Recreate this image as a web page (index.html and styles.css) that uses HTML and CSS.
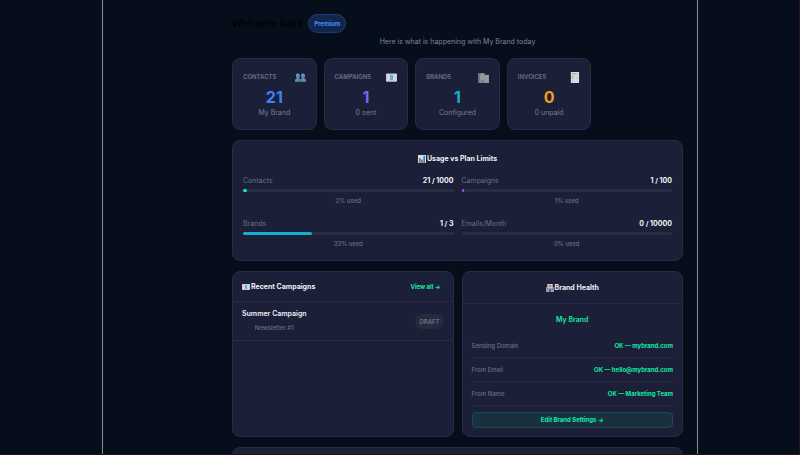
FILE: index.html
```
<!DOCTYPE html>
<html lang="en">
<head>
	<meta charset="UTF-8">
	<meta name="viewport" content="width=device-width, initial-scale=1">
	<title>Dashboard</title>
	<link rel="stylesheet" href="styles.css">
</head>
<body>
	<svg class="sprite" aria-hidden="true">
		<symbol id="icon-mail" viewBox="0 0 12 9">
			<rect width="12" height="9" rx="1" fill="#c9cdd2"/>
			<path d="M1 1l3 3.500L1 8M11 1L8 4.500 11 8" fill="none" stroke="#f2f3f4" stroke-width="1"/>
			<rect x="4.500" y="2" width="3" height="5" fill="#4a94cf"/>
			<path d="M5 3h2M5 4.500h1.500M5 6h2" stroke="#b5d8ef" stroke-width=".6"/>
		</symbol>
	</svg>

	<div class="frame">
		<main class="content">
			<header class="page-header">
				<div class="title-row">
					<h1>Welcome back</h1>
					<span class="plan-badge">Premium</span>
				</div>
				<p>Here is what is happening with My Brand today</p>
			</header>

			<section class="stats">
				<div class="card stat">
					<div class="stat-top">
						<span class="stat-label">Contacts</span>
						<svg class="stat-icon" viewBox="0 0 12 12" aria-hidden="true">
							<path d="M0 10.500V9q0-2 2-2.300Q1 5.500 1 4q0-2.500 2.200-2.500T5.400 4q0 1.500-1 2.700 1.400.3 1.600 1.800.2-1.500 1.600-1.800-1-1.200-1-2.700 0-2.500 2.200-2.500T11 4q0 1.500-1 2.700 2 .3 2 2.300v1.500z" fill="#5d8dab"/>
							<path d="M1.500 3.500q.5-1.500 1.700-1.500M7.200 3.500Q7.700 2 8.900 2" fill="none" stroke="#86b3c9" stroke-width=".8"/>
							<path d="M6 8v2.500" stroke="#284a66" stroke-width=".6"/>
						</svg>
					</div>
					<div class="stat-value blue">21</div>
					<div class="stat-note">My Brand</div>
				</div>
				<div class="card stat">
					<div class="stat-top">
						<span class="stat-label">Campaigns</span>
						<svg class="stat-icon" aria-hidden="true"><use href="#icon-mail"/></svg>
					</div>
					<div class="stat-value purple">1</div>
					<div class="stat-note">0 sent</div>
				</div>
				<div class="card stat">
					<div class="stat-top">
						<span class="stat-label">Brands</span>
						<svg class="stat-icon" viewBox="0 0 12 12" aria-hidden="true">
							<path d="M0 1.500L7 1v2h5v9H0z" fill="#8b9799"/>
							<path d="M0 1.500h2V12H0z" fill="#69757a"/>
							<path d="M3 3h3M3 5h3M3 7h3M8 5h3M8 7h3M8 9h3" stroke="#9ca8a8" stroke-width=".8"/>
							<path d="M4 9h2v3H4z" fill="#69757a"/>
						</svg>
					</div>
					<div class="stat-value cyan">1</div>
					<div class="stat-note">Configured</div>
				</div>
				<div class="card stat">
					<div class="stat-top">
						<span class="stat-label">Invoices</span>
						<svg class="stat-icon" viewBox="0 0 12 12" aria-hidden="true">
							<path d="M2 0h9v12H2z" fill="#d9dbdc"/>
							<path d="M3 2h6M3 5h2M3 7h2" stroke="#777d84" stroke-width=".7"/>
							<path d="M7 5h3M7 7h3M3 10h3" stroke="#bfc3c6" stroke-width=".7"/>
						</svg>
					</div>
					<div class="stat-value orange">0</div>
					<div class="stat-note">0 unpaid</div>
				</div>
			</section>

			<section class="card usage">
				<h2>
					<svg class="heading-icon" viewBox="0 0 8 8" aria-hidden="true">
						<rect width="8" height="8" fill="#d5dce2"/>
						<path d="M1 3h1.700v5H1z" fill="#3f9d5b"/>
						<path d="M3.200 4.500h1.600V8H3.200z" fill="#d04848"/>
						<path d="M5.400 1H7v7H5.400z" fill="#3478c4"/>
					</svg>
					Usage vs Plan Limits
				</h2>
				<div class="usage-grid">
					<div class="usage-item">
						<div class="usage-top"><span>Contacts</span><strong>21 / 1000</strong></div>
						<div class="bar"><div class="bar-fill green-fill" style="width: 2%"></div></div>
						<p>2% used</p>
					</div>
					<div class="usage-item">
						<div class="usage-top"><span>Campaigns</span><strong>1 / 100</strong></div>
						<div class="bar"><div class="bar-fill purple-fill" style="width: 1%"></div></div>
						<p>1% used</p>
					</div>
					<div class="usage-item">
						<div class="usage-top"><span>Brands</span><strong>1 / 3</strong></div>
						<div class="bar"><div class="bar-fill cyan-fill" style="width: 33%"></div></div>
						<p>33% used</p>
					</div>
					<div class="usage-item">
						<div class="usage-top"><span>Emails/Month</span><strong>0 / 10000</strong></div>
						<div class="bar"></div>
						<p>0% used</p>
					</div>
				</div>
			</section>

			<div class="columns">
				<section class="card">
					<div class="panel-head">
						<h2>
							<svg class="heading-icon" aria-hidden="true"><use href="#icon-mail"/></svg>
							Recent Campaigns
						</h2>
						<a class="view-all" href="#">View all →</a>
					</div>
					<div class="campaign">
						<div class="campaign-info">
							<h3>Summer Campaign</h3>
							<p>Newsletter #1</p>
						</div>
						<span class="status">Draft</span>
					</div>
				</section>

				<section class="card">
					<div class="panel-head centered">
						<h2>
							<svg class="heading-icon" viewBox="0 0 8 8" aria-hidden="true">
								<path d="M0 3h1V0h6v3h1v5H0z" fill="#9b9fa5"/>
								<path d="M2 0h4v4H2z" fill="#d9d5d8"/>
								<path d="M4 .5v3M2.500 2h3" stroke="#d9534f" stroke-width="1"/>
								<path d="M3 5h2v3H3z" fill="#59616e"/>
								<path d="M.7 5h1M6.300 5h1" stroke="#59616e"/>
							</svg>
							Brand Health
						</h2>
					</div>
					<div class="health">
						<h3>My Brand</h3>
						<dl>
							<div class="health-row"><dt>Sending Domain</dt><dd>OK — mybrand.com</dd></div>
							<div class="health-row"><dt>From Email</dt><dd>OK — hello@mybrand.com</dd></div>
							<div class="health-row"><dt>From Name</dt><dd>OK — Marketing Team</dd></div>
						</dl>
						<a class="edit-link" href="#">Edit Brand Settings →</a>
					</div>
				</section>
			</div>

			<section class="card next-card"></section>
		</main>
	</div>
</body>
</html>
```

FILE: styles.css
```
* {
	box-sizing: border-box;
	margin: 0;
	padding: 0;
}

body {
	height: 100vh;
	overflow: hidden;
	padding: 0 101px 0 102px;
	font-family: Inter, "Liberation Sans", sans-serif;
	font-size: 7px;
	line-height: 10px;
	color: #6b7185;
	background-color: #070e1b;
	border-right: 1px solid #28101c;
	border-bottom: 1px solid #28101c;
}

a {
	text-decoration: none;
}

.sprite {
	position: absolute;
	width: 0;
	height: 0;
}

.frame {
	height: 100%;
	overflow: hidden;
	padding: 14px 14px 0 129px;
	border-left: 1px solid #8b8e97;
	border-right: 1px solid #8b8e97;
}

.content {
	display: flex;
	flex-direction: column;
	gap: 10px;
}

.card {
	background-color: #1b1f38;
	border: 1px solid #272c43;
	border-radius: 8px;
}

.page-header {
	margin-bottom: 1px;
	text-align: center;
}

.title-row {
	display: flex;
	align-items: center;
	gap: 5px;
	margin-bottom: 4px;
}

h1 {
	font-size: 10px;
	font-weight: 600;
	line-height: 19px;
	color: #010206;
}

.plan-badge {
	padding: 0 5px;
	font-size: 6px;
	font-weight: 700;
	line-height: 17px;
	color: #4a8df0;
	background-color: #10264d;
	border: 1px solid #1b3d77;
	border-radius: 10px;
}

.page-header p {
	color: #7f8492;
}

/* stat cards */
.stats {
	display: grid;
	grid-template-columns: repeat(5, 1fr);
	gap: 7px;
}

.stat {
	padding: 12px 10px 11px;
	text-align: center;
}

.stat-top {
	display: flex;
	align-items: center;
	justify-content: space-between;
	height: 12px;
	margin-bottom: 4px;
}

.stat-label {
	font-size: 6px;
	font-weight: 600;
	text-transform: uppercase;
}

.stat-icon {
	width: 11px;
	height: 11px;
}

.stat-value {
	margin-bottom: 1px;
	font-size: 16px;
	font-weight: 700;
	line-height: 20px;
}

.stat-note {
	color: #787e90;
}

.blue { color: #3b82f6; }
.purple { color: #8b5cf6; }
.cyan { color: #0fb1cf; }
.orange { color: #f59e1b; }

h2 {
	display: flex;
	align-items: center;
	gap: 1px;
	font-size: 7px;
	font-weight: 700;
	line-height: 11px;
	color: #f1f2f6;
}

.heading-icon {
	width: 8px;
	height: 8px;
}

/* plan usage */
.usage {
	padding: 12px 10px 11px;
}

.usage h2 {
	justify-content: center;
	margin-bottom: 11px;
}

.usage-grid {
	display: grid;
	grid-template-columns: 1fr 1fr;
	gap: 12px 8px;
	text-align: center;
}

.usage-top {
	display: flex;
	justify-content: space-between;
	margin-bottom: 3px;
	line-height: 11px;
}

.usage-top strong {
	font-weight: 700;
	color: #f1f2f6;
}

.bar {
	height: 3px;
	margin-bottom: 4px;
	background-color: #282d42;
	border-radius: 2px;
}

.bar-fill {
	height: 100%;
	border-radius: 2px;
}

.green-fill { background-color: #12eca4; }
.purple-fill { background-color: #8b5cf6; }
.cyan-fill { background-color: #0fb1cf; }

.usage-item p,
.campaign p {
	font-size: 6px;
	font-weight: 500;
}

/* campaigns and brand health */
.columns {
	display: grid;
	grid-template-columns: 1fr 1fr;
	gap: 8px;
}

.panel-head {
	display: flex;
	align-items: center;
	justify-content: space-between;
	padding: 9px;
	border-bottom: 1px solid #272c43;
}

.panel-head.centered {
	justify-content: center;
	padding: 10px;
}

.view-all {
	padding: 0 3px;
	font-size: 6px;
	font-weight: 700;
	color: #12eca4;
}

.campaign {
	display: flex;
	align-items: center;
	justify-content: space-between;
	padding: 7px 9px;
	border-bottom: 1px solid #272c43;
}

.campaign-info {
	text-align: center;
}

h3 {
	font-size: 7px;
	font-weight: 600;
	color: #f1f2f6;
}

.campaign h3 {
	margin-bottom: 4px;
}

.status {
	padding: 0 4px;
	font-size: 6px;
	font-weight: 600;
	line-height: 15px;
	text-transform: uppercase;
	background-color: #262b3e;
	border-radius: 8px;
}

.health {
	padding: 10px 9px 8px;
	text-align: center;
}

.health h3 {
	margin-bottom: 8px;
	line-height: 12px;
	color: #12eca4;
}

.health-row {
	display: flex;
	justify-content: space-between;
	padding: 7px 0 6px;
	font-size: 6px;
	font-weight: 500;
	border-bottom: 1px solid #272c43;
}

.health-row dd {
	font-weight: 700;
	color: #12eca4;
}

.edit-link {
	display: block;
	margin-top: 6px;
	font-size: 6px;
	font-weight: 700;
	line-height: 14px;
	color: #12eca4;
	background-color: #19303f;
	border: 1px solid #1a4b50;
	border-radius: 4px;
}

.next-card {
	min-height: 70px;
}
```
